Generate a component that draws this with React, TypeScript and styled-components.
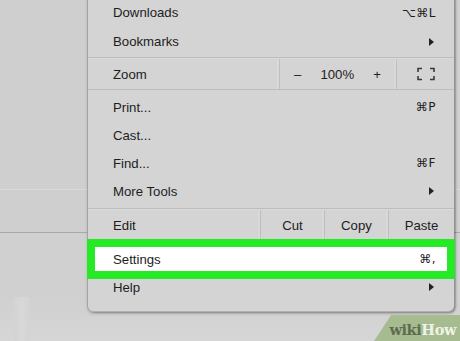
import styled, { createGlobalStyle } from "styled-components";

const Global = createGlobalStyle`
  html, body { margin: 0; padding: 0; }
  body {
    background: #cfcfcf;
    font-family: "Liberation Sans", Arial, sans-serif;
    -webkit-font-smoothing: antialiased;
  }
`;

const Page = styled.div`
  position: relative;
  width: 460px;
  height: 341px;
  overflow: hidden;
  display: flex;
  flex-direction: column;
  background: #cfcfcf;
`;

const Band = styled.div<{ $h: number; $line: string }>`
  height: ${(p) => p.$h}px;
  flex: none;
  border-bottom: 1px solid ${(p) => p.$line};
`;

const Floor = styled.div`
  flex: 1;
  display: flex;
  align-items: flex-end;
  padding-left: 14px;
  background: linear-gradient(#d0d0d0 0, #d0d0d0 60%, #d6d6d6 100%);
`;

const Pillar = styled.div`
  width: 16px;
  height: 44px;
  background: linear-gradient(90deg, #d3d3d3, #d8d8d8, #d3d3d3);
`;

const Menu = styled.div`
  position: absolute;
  left: 87px;
  top: -2px;
  width: 366px;
  padding-bottom: 7px;
  background: #d4d4d4;
  border-left: 1px solid #a3a3a3;
  border-bottom: 1px solid #b0b0b0;
  border-radius: 0 0 6px 6px;
  box-shadow: 2px 1px 2px rgba(0, 0, 0, 0.28), 0 2px 3px rgba(0, 0, 0, 0.12);
  color: #1d1d1d;
  font-size: 13.2px;
`;

const Group = styled.div<{ $pad?: number }>`
  padding: ${(p) => p.$pad ?? 0}px 0;
`;

const Item = styled.div<{ $h?: number }>`
  height: ${(p) => p.$h ?? 28}px;
  display: flex;
  align-items: center;
  justify-content: space-between;
  padding: 0 18px 0 25px;
`;

const Settings = styled(Item)`
  position: relative;
  z-index: 1;
  height: 24px;
  margin: 2px 7px 2px 7px;
  padding: 0 11px 0 18px;
  background: #fff;
  box-shadow: 0 0 0 8px #26ea26;
`;

const Keys = styled.span`
  font-family: "DejaVu Sans", "Liberation Sans", sans-serif;
  font-size: 12px;
  letter-spacing: 0.5px;
`;

const Arrow = styled.span`
  width: 0;
  height: 0;
  margin-right: 2px;
  border-top: 4px solid transparent;
  border-bottom: 4px solid transparent;
  border-left: 5px solid #222;
`;

const Line = styled.div`
  height: 1px;
  background: #bdbdbd;
  border-bottom: 1px solid #dadada;
`;

const Strip = styled.div<{ $cols: string }>`
  height: 30px;
  display: grid;
  grid-template-columns: ${(p) => p.$cols};
  border-bottom: 1px solid #bdbdbd;
`;

const Cell = styled.div<{ $align?: string }>`
  display: flex;
  align-items: center;
  justify-content: ${(p) => p.$align ?? "center"};
  padding: ${(p) => (p.$align ? "0 0 0 25px" : "0")};
  border-right: 1px solid #bfbfbf;
  box-shadow: inset -2px 0 0 #d9d9d9;
  &:last-child {
    border-right: none;
    box-shadow: none;
  }
`;

const ZoomCtl = styled(Cell)`
  justify-content: space-between;
  padding: 0 15px 0 14px;
`;

const Logo = styled.div`
  position: absolute;
  right: 0;
  bottom: 0;
  width: 86px;
  height: 26px;
  padding: 2px 4px 0 0;
  box-sizing: border-box;
  display: flex;
  justify-content: flex-end;
  align-items: center;
  background: #a7bb90;
  clip-path: polygon(20% 0, 100% 0, 100% 100%, 0 100%);
  font-family: "DejaVu Serif", "Liberation Serif", serif;
  font-weight: bold;
  font-size: 14.5px;
  letter-spacing: -0.4px;
`;

const Wiki = styled.span<{ $light?: boolean }>`
  color: ${(p) => (p.$light ? "#eef3e6" : "#5d6c4e")};
`;

function FullScreen() {
  return (
    <svg width="18" height="14" viewBox="0 0 18 14" fill="none" stroke="#3a3a3a" strokeWidth="1.6">
      <path d="M1 5V1.5H5M13 1.5H17V5M17 9V12.5H13M5 12.5H1V9" />
    </svg>
  );
}

export default function App() {
  return (
    <>
      <Global />
      <Page>
        <Band $h={189} $line="#dadada" />
        <Band $h={42} $line="#a9a9a9" />
        <Floor>
          <Pillar />
        </Floor>

        <Menu>
          <Group>
            <Item $h={29}>
              <span>Downloads</span>
              <Keys>⌥⌘L</Keys>
            </Item>
            <Item $h={29}>
              <span>Bookmarks</span>
              <Arrow />
            </Item>
          </Group>
          <Group $pad={1}>
            <Line />
            <Strip $cols="192px 117px 1fr">
              <Cell $align="flex-start">Zoom</Cell>
              <ZoomCtl>
                <span>–</span>
                <span>100%</span>
                <span>+</span>
              </ZoomCtl>
              <Cell>
                <FullScreen />
              </Cell>
            </Strip>
          </Group>
          <Group $pad={2}>
            <Item>
              <span>Print...</span>
              <Keys>⌘P</Keys>
            </Item>
            <Item>
              <span>Cast...</span>
            </Item>
            <Item>
              <span>Find...</span>
              <Keys>⌘F</Keys>
            </Item>
            <Item>
              <span>More Tools</span>
              <Arrow />
            </Item>
          </Group>
          <Group $pad={1}>
            <Line />
            <Strip $cols="173px 64px 64px 1fr">
              <Cell $align="flex-start">Edit</Cell>
              <Cell>Cut</Cell>
              <Cell>Copy</Cell>
              <Cell>Paste</Cell>
            </Strip>
          </Group>
          <Group $pad={3}>
            <Settings>
              <span>Settings</span>
              <Keys>⌘,</Keys>
            </Settings>
            <Item>
              <span>Help</span>
              <Arrow />
            </Item>
          </Group>
        </Menu>

        <Logo>
          <Wiki>wiki</Wiki>
          <Wiki $light>How</Wiki>
        </Logo>
      </Page>
    </>
  );
}
